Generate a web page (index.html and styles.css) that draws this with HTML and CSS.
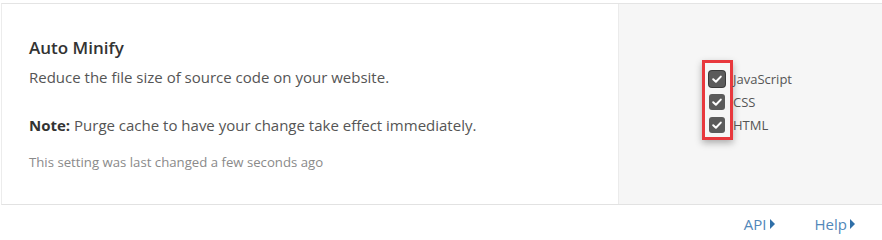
FILE: index.html
```html
<!DOCTYPE html>
<html>
<head>
<meta charset="utf-8">
<link rel="stylesheet" href="styles.css">
</head>
<body>
<div class="card">
  <div class="main">
    <h3 class="title">Auto Minify</h3>
    <p class="desc">Reduce the file size of source code on your website.</p>
    <p class="note"><strong>Note:</strong> Purge cache to have your change take effect immediately.</p>
    <p class="meta">This setting was last changed a few seconds ago</p>
  </div>
  <div class="side">
    <div class="options">
      <div class="boxes">
        <span class="check focus"><svg viewBox="0 0 16 16" width="16" height="16"><path d="M4.2 8.3 L6.9 10.8 L11.8 5.6" fill="none" stroke="#fff" stroke-width="2" stroke-linecap="round" stroke-linejoin="round"/></svg></span>
        <span class="check"><svg viewBox="0 0 16 16" width="16" height="16"><path d="M4.2 8.3 L6.9 10.8 L11.8 5.6" fill="none" stroke="#fff" stroke-width="2" stroke-linecap="round" stroke-linejoin="round"/></svg></span>
        <span class="check"><svg viewBox="0 0 16 16" width="16" height="16"><path d="M4.2 8.3 L6.9 10.8 L11.8 5.6" fill="none" stroke="#fff" stroke-width="2" stroke-linecap="round" stroke-linejoin="round"/></svg></span>
      </div>
      <div class="labels">
        <span class="label">JavaScript</span>
        <span class="label">CSS</span>
        <span class="label">HTML</span>
      </div>
    </div>
  </div>
</div>
<div class="footer">
  <a class="link">API<span class="tri"></span></a>
  <a class="link">Help<span class="tri"></span></a>
</div>
</body>
</html>
```
FILE: styles.css
```css
html, body {
  margin: 0;
  padding: 0;
  background: #fff;
  font-family: "Open Sans", "Noto Sans", sans-serif;
  overflow: hidden;
}
.card {
  margin: 3px 0 0 1px;
  width: 900px;
  height: 200px;
  border-top: 1px solid #e4e4e4;
  border-left: 1px solid #ececec;
  border-bottom: 1px solid #e2e2e2;
  display: grid;
  grid-template-columns: 616px 1fr;
}
.main {
  padding: 32px 0 0 27px;
  color: #404040;
}
.title {
  margin: 0;
  font-size: 17px;
  font-weight: 600;
  color: #333;
  line-height: 24px;
}
.desc {
  margin: 7px 0 0;
  font-size: 15px;
  line-height: 20px;
  color: #555;
}
.note {
  margin: 28px 0 0;
  font-size: 15px;
  line-height: 20px;
  color: #555;
}
.note strong {
  color: #333;
  font-weight: 700;
}
.meta {
  margin: 18px 0 0;
  font-size: 13.2px;
  line-height: 18px;
  color: #8a8a8a;
}
.side {
  background: #f6f6f6;
  border-left: 1px solid #ebebeb;
  padding: 56px 0 0 83px;
}
.options {
  display: flex;
  align-items: flex-start;
}
.boxes {
  display: flex;
  flex-direction: column;
  gap: 7px;
  padding: 8px 5px 4px 4px;
  border: 3px solid #e8383d;
  box-shadow: 0 3px 7px rgba(0,0,0,0.3);
}
.check {
  width: 16px;
  height: 16px;
  border-radius: 3px;
  background: #5b5b5b;
  display: block;
}
.check svg { display: block; }
.check.focus {
  box-shadow: 0 0 0 1px #3a3a3a;
}
.labels {
  display: flex;
  flex-direction: column;
  padding-top: 11px;
  gap: 7px;
}
.label {
  height: 16px;
  line-height: 16px;
  font-size: 13px;
  color: #555;
}
.footer {
  display: flex;
  justify-content: flex-end;
  gap: 40px;
  padding: 9px 27px 0 0;
}
.link {
  font-size: 15px;
  color: #5287b9;
  line-height: 20px;
  display: flex;
  align-items: center;
}
.tri {
  width: 0;
  height: 0;
  margin-left: 3px;
  border-left: 5px solid #2f6fa8;
  border-top: 5px solid transparent;
  border-bottom: 5px solid transparent;
}
```
